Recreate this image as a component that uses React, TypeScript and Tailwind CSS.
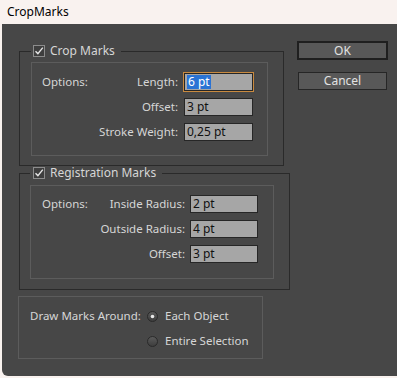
import React from 'react'

const font = { fontFamily: '"Noto Sans", "Open Sans", Arial, sans-serif' }

function CheckBox() {
  return (
    <svg width="12" height="12" viewBox="0 0 12 12" className="shrink-0">
      <rect x="0.5" y="0.5" width="11" height="11" fill="#3e3e3e" stroke="#8c8c8c" />
      <path d="M2.5 6.2 L4.9 8.6 L9.8 2.6" fill="none" stroke="#e6e6e6" strokeWidth="1.4" />
    </svg>
  )
}

function Radio({ checked }: { checked?: boolean }) {
  return (
    <svg width="11" height="11" viewBox="0 0 11 11" className="shrink-0">
      <defs>
        <linearGradient id={checked ? 'rg1' : 'rg2'} x1="0" y1="0" x2="0" y2="1">
          <stop offset="0" stopColor="#5c5c5c" />
          <stop offset="1" stopColor="#3c3c3c" />
        </linearGradient>
      </defs>
      <circle cx="5.5" cy="5.5" r="5" fill={`url(#${checked ? 'rg1' : 'rg2'})`} stroke="#2a2a2a" />
      {checked && <circle cx="5.5" cy="5.5" r="1.8" fill="#e8e8e8" />}
    </svg>
  )
}

function Field({ value, focused, width }: { value: string; focused?: boolean; width: string }) {
  return (
    <div
      className={`${width} h-[18px] bg-[#a6a6a6] border border-[#262626] flex items-center pl-[2px] text-[12px] text-[#111] leading-none ${
        focused ? 'ring-1 ring-[#c98a3f]' : ''
      }`}
    >
      {focused ? <span className="bg-[#2a73d4] text-white px-[1px] leading-[14px]">{value}</span> : value}
    </div>
  )
}

export default function App() {
  return (
    <div className="w-[397px] h-[378px] bg-[#f9f2ef] overflow-hidden" style={font}>
      {/* title bar */}
      <div className="h-[24px] flex items-center pl-[7px] text-[12px] text-black">CropMarks</div>

      {/* body */}
      <div className="ml-[2px] h-[352px] bg-[#474747] rounded-bl-[6px] flex pt-[17px] pl-[17px] text-[11.5px] text-[#d6d6d6]">
        <div className="w-[271px] mt-[3px] flex flex-col">
          {/* Crop Marks */}
          <fieldset className="w-[265px] border border-[#2a2a2a] pl-[11px] pr-[15px] pb-[9px]">
            <legend className="pl-[2px] pr-[6px] flex items-center gap-[5px] leading-[14px] h-[14px] text-[12px]">
              <CheckBox />
              <span>Crop Marks</span>
            </legend>
            <div className="mt-[4px] border border-[#5c5c5c] pl-[10px] pr-[14px] pt-[10px] pb-[14px] grid grid-cols-[auto_1fr_69px] gap-x-[6px] gap-y-[7px] items-center">
              <span>Options:</span>
              <span className="text-right">Length:</span>
              <Field value="6 pt" focused width="w-[69px]" />
              <span />
              <span className="text-right">Offset:</span>
              <Field value="3 pt" width="w-[69px]" />
              <span />
              <span className="text-right">Stroke Weight:</span>
              <Field value="0,25 pt" width="w-[69px]" />
            </div>
          </fieldset>

          {/* Registration Marks */}
          <fieldset className="w-[271px] border border-[#2a2a2a] pl-[10px] pr-[15px] pb-[10px]">
            <legend className="pl-[3px] pr-[6px] flex items-center gap-[5px] leading-[14px] h-[14px] text-[12px]">
              <CheckBox />
              <span>Registration Marks</span>
            </legend>
            <div className="mt-[5px] border border-[#5c5c5c] pl-[11px] pt-[9px] pb-[15px] pr-[15px] grid grid-cols-[auto_1fr_68px] gap-x-[5px] gap-y-[7px] items-center">
              <span>Options:</span>
              <span className="text-right">Inside Radius:</span>
              <Field value="2 pt" width="w-[68px]" />
              <span />
              <span className="text-right">Outside Radius:</span>
              <Field value="4 pt" width="w-[68px]" />
              <span />
              <span className="text-right">Offset:</span>
              <Field value="3 pt" width="w-[68px]" />
            </div>
          </fieldset>

          {/* Draw Marks Around */}
          <div className="w-[245px] -ml-[1px] mt-[6px] border border-[#5c5c5c] pl-[11px] pt-[11px] pb-[9px] flex flex-col gap-[9px]">
            <div className="flex items-center h-[16px]">
              <span className="w-[117px]">Draw Marks Around:</span>
              <Radio checked />
              <span className="ml-[7px]">Each Object</span>
            </div>
            <div className="flex items-center h-[16px]">
              <span className="w-[117px]" />
              <Radio />
              <span className="ml-[7px]">Entire Selection</span>
            </div>
          </div>
        </div>

        {/* buttons */}
        <div className="ml-[7px] flex flex-col">
          <button className="w-[91px] h-[19px] border-2 border-[#1f1f1f] bg-[#585858] text-[#e2e2e2] text-[12px] leading-none flex items-center justify-center">
            OK
          </button>
          <button className="mt-[12px] ml-[1px] w-[89px] h-[18px] border border-[#262626] bg-[#585858] text-[#e2e2e2] text-[12px] leading-none flex items-center justify-center">
            Cancel
          </button>
        </div>
      </div>
    </div>
  )
}
